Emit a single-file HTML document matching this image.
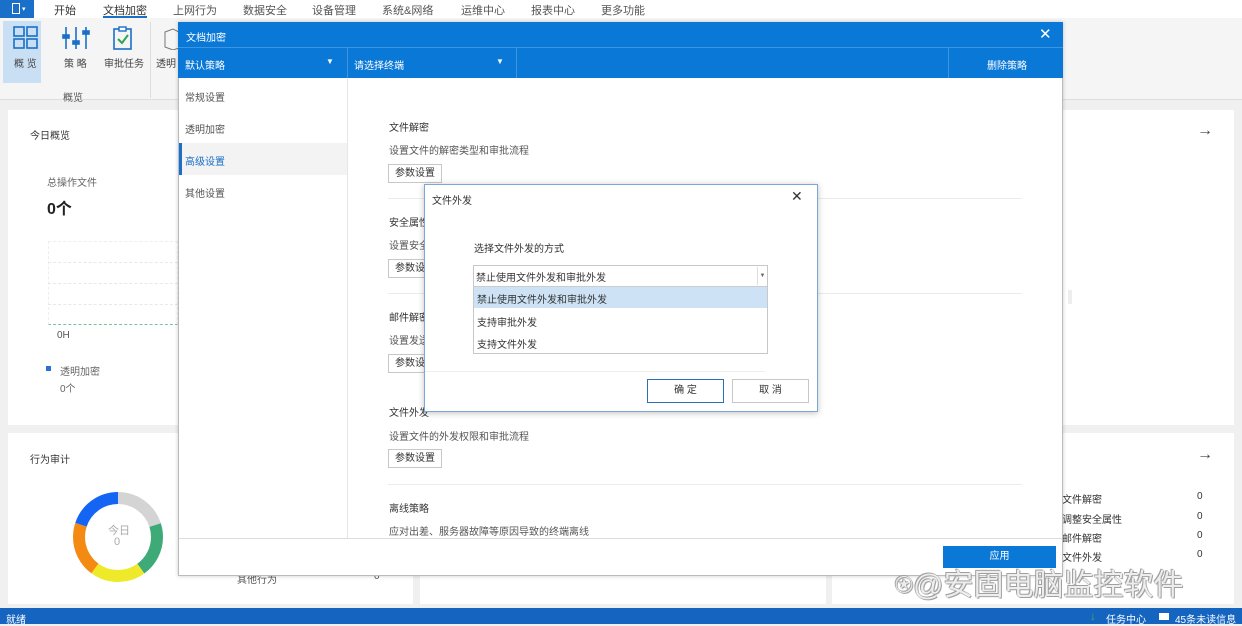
<!DOCTYPE html>
<html><head><meta charset="utf-8"><style>
*{margin:0;padding:0;box-sizing:border-box}
body{width:1242px;height:624px;overflow:hidden;position:relative;background:#f0f0f0;font-family:"Liberation Sans","Noto Sans CJK SC",sans-serif;font-size:10px;color:#333}
.a{position:absolute;white-space:nowrap}
.card{position:absolute;background:#fff}
.btn{position:absolute;border:1px solid #c8c8c8;background:#fff;font-size:10px;text-align:center;color:#333}
.hr{position:absolute;height:1px;background:#ececec}
</style></head><body>
<!-- top menu -->
<div class="a" style="left:0;top:0;width:1242px;height:18px;background:#fff"></div>
<div class="a" style="left:0;top:0;width:34px;height:18px;background:#1a6fc9"></div>
<div class="a" style="left:12px;top:3px;width:8px;height:11px;border:1.5px solid #fff"></div>
<div class="a" style="left:22px;top:5px;color:#fff;font-size:7px">▾</div>
<div class="a" style="top:2px;left:54px;font-size:11px;color:#333">开始</div>
<div class="a" style="top:2px;left:103px;font-size:11px;color:#333">文档加密</div>
<div class="a" style="left:103px;top:16px;width:44px;height:2px;background:#1a6fc9"></div>
<div class="a" style="top:2px;left:173px;font-size:11px;color:#555">上网行为</div>
<div class="a" style="top:2px;left:243px;font-size:11px;color:#555">数据安全</div>
<div class="a" style="top:2px;left:312px;font-size:11px;color:#555">设备管理</div>
<div class="a" style="top:2px;left:382px;font-size:11px;color:#555">系统&amp;网络</div>
<div class="a" style="top:2px;left:461px;font-size:11px;color:#555">运维中心</div>
<div class="a" style="top:2px;left:531px;font-size:11px;color:#555">报表中心</div>
<div class="a" style="top:2px;left:601px;font-size:11px;color:#555">更多功能</div>
<!-- ribbon -->
<div class="a" style="left:0;top:18px;width:1242px;height:82px;background:#f5f5f5;border-bottom:1px solid #ddd"></div>
<div class="a" style="left:3px;top:21px;width:38px;height:62px;background:#c9dff3"></div>
<svg class="a" style="left:13px;top:26px" width="26" height="24"><g fill="none" stroke="#1a6fc9" stroke-width="1.6"><rect x="1" y="1" width="10" height="9"/><rect x="14" y="1" width="10" height="9"/><rect x="1" y="13" width="10" height="9"/><rect x="14" y="13" width="10" height="9"/></g></svg>
<div class="a" style="left:14px;top:55px;color:#444">概 览</div>
<svg class="a" style="left:62px;top:26px" width="28" height="24"><g stroke="#1a6fc9" stroke-width="1.6"><line x1="4" y1="1" x2="4" y2="23"/><line x1="14" y1="1" x2="14" y2="23"/><line x1="24" y1="1" x2="24" y2="23"/><rect x="1" y="9" width="6" height="3" fill="#1a6fc9"/><rect x="11" y="15" width="6" height="3" fill="#1a6fc9"/><rect x="21" y="5" width="6" height="3" fill="#1a6fc9"/></g></svg>
<div class="a" style="left:64px;top:55px;color:#444">策 略</div>
<svg class="a" style="left:112px;top:26px" width="22" height="24"><rect x="2" y="3" width="17" height="20" fill="none" stroke="#1a6fc9" stroke-width="1.6"/><rect x="7" y="1" width="7" height="4" fill="#fff" stroke="#1a6fc9" stroke-width="1.4"/><path d="M6 13l4 4 6-8" fill="none" stroke="#2ea44f" stroke-width="2"/></svg>
<div class="a" style="left:104px;top:55px;color:#444">审批任务</div>
<svg class="a" style="left:163px;top:28px" width="16" height="22"><path d="M2 4l8-3 6 3v16l-6 2-8-3z" fill="none" stroke="#777"/></svg>
<div class="a" style="left:156px;top:55px;color:#444">透明</div>
<div class="a" style="left:63px;top:89px;color:#555">概览</div>
<div class="a" style="left:150px;top:22px;width:1px;height:76px;background:#ddd"></div>
<!-- cards -->
<div class="card" style="left:8px;top:110px;width:405px;height:315px"></div>
<div class="a" style="left:30px;top:127px;color:#333">今日概览</div>
<div class="a" style="left:47px;top:174px;color:#666">总操作文件</div>
<div class="a" style="left:47px;top:195px;font-size:16px;font-weight:bold;color:#222">0个</div>
<div class="a" style="left:48px;top:241px;width:130px;height:84px;border:1px dashed #eee;border-bottom:1px dashed #7cc29b"></div>
<div class="a" style="left:48px;top:262px;width:130px;border-top:1px dashed #e8e8e8"></div>
<div class="a" style="left:48px;top:283px;width:130px;border-top:1px dashed #e8e8e8"></div>
<div class="a" style="left:48px;top:304px;width:130px;border-top:1px dashed #e8e8e8"></div>
<div class="a" style="left:57px;top:330px;color:#555">0H</div>
<div class="a" style="left:46px;top:366px;width:5px;height:5px;background:#2a6fdb"></div>
<div class="a" style="left:60px;top:363px;color:#666">透明加密</div>
<div class="a" style="left:60px;top:380px;color:#666">0个</div>
<div class="card" style="left:832px;top:110px;width:402px;height:315px"></div>
<div class="a" style="left:1197px;top:122px;font-size:16px;color:#444">→</div>
<div class="a" style="left:1068px;top:290px;width:4px;height:14px;background:#eee"></div>
<div class="card" style="left:8px;top:433px;width:405px;height:171px"></div>
<div class="a" style="left:30px;top:451px;color:#333">行为审计</div>
<svg class="a" style="left:72px;top:491px" width="92" height="92" viewBox="0 0 92 92">
<g fill="none" stroke-width="12" transform="rotate(-90 46 46)">
<circle cx="46" cy="46" r="39" stroke="#d4d4d4" stroke-dasharray="49 300" stroke-dashoffset="0"/>
<circle cx="46" cy="46" r="39" stroke="#3daa78" stroke-dasharray="49 300" stroke-dashoffset="-49"/>
<circle cx="46" cy="46" r="39" stroke="#eeea2a" stroke-dasharray="49 300" stroke-dashoffset="-98"/>
<circle cx="46" cy="46" r="39" stroke="#f48a12" stroke-dasharray="49 300" stroke-dashoffset="-147"/>
<circle cx="46" cy="46" r="39" stroke="#1565f5" stroke-dasharray="50 300" stroke-dashoffset="-196"/>
</g></svg>
<div class="a" style="left:108px;top:522px;color:#aaa;font-size:11px">今日</div>
<div class="a" style="left:114px;top:536px;color:#aaa;font-size:11px">0</div>
<div class="a" style="left:237px;top:571px;color:#555">其他行为</div>
<div class="a" style="left:374px;top:571px;color:#555">0</div>
<div class="card" style="left:420px;top:433px;width:406px;height:171px"></div>
<div class="card" style="left:832px;top:433px;width:402px;height:171px"></div>
<div class="a" style="left:1197px;top:446px;font-size:16px;color:#444">→</div>
<div class="a" style="left:1062px;top:491px;color:#333">文件解密</div><div class="a" style="left:1197px;top:491px;color:#333">0</div>
<div class="a" style="left:1062px;top:511px;color:#333">调整安全属性</div><div class="a" style="left:1197px;top:511px;color:#333">0</div>
<div class="a" style="left:1062px;top:530px;color:#333">邮件解密</div><div class="a" style="left:1197px;top:530px;color:#333">0</div>
<div class="a" style="left:1062px;top:549px;color:#333">文件外发</div><div class="a" style="left:1197px;top:549px;color:#333">0</div>
<!-- status -->
<div class="a" style="left:0;top:608px;width:1242px;height:16px;background:#1565c0"></div>
<div class="a" style="left:6px;top:611px;color:#fff">就绪</div>
<div class="a" style="left:1090px;top:609px;color:#4caf50;font-size:12px">↓</div>
<div class="a" style="left:1106px;top:611px;color:#fff">任务中心</div>
<div class="a" style="left:1159px;top:613px;width:10px;height:7px;background:#fff"></div>
<div class="a" style="left:1175px;top:611px;color:#fff">45条未读信息</div>
<!-- main dialog -->
<div class="a" style="left:178px;top:22px;width:885px;height:554px;background:#fff;border:1px solid #bbb;box-shadow:0 0 4px rgba(0,0,0,.2)"></div>
<div class="a" style="left:178px;top:22px;width:885px;height:25px;background:#0a78d7"></div>
<div class="a" style="left:186px;top:29px;color:#fff">文档加密</div>
<div class="a" style="left:1039px;top:25px;color:#fff;font-size:15px">✕</div>
<div class="a" style="left:178px;top:47px;width:885px;height:31px;background:#0a78d7;border-top:1px solid #3d95e0"></div>
<div class="a" style="left:347px;top:47px;width:1px;height:31px;background:#3d95e0"></div>
<div class="a" style="left:516px;top:47px;width:1px;height:31px;background:#3d95e0"></div>
<div class="a" style="left:948px;top:47px;width:1px;height:31px;background:#3d95e0"></div>
<div class="a" style="left:185px;top:57px;color:#fff">默认策略</div>
<div class="a" style="left:326px;top:57px;color:#fff;font-size:8px">▼</div>
<div class="a" style="left:354px;top:57px;color:#fff">请选择终端</div>
<div class="a" style="left:496px;top:57px;color:#fff;font-size:8px">▼</div>
<div class="a" style="left:987px;top:57px;color:#fff">删除策略</div>
<div class="a" style="left:347px;top:78px;width:1px;height:460px;background:#e6e6e6"></div>
<div class="a" style="left:185px;top:89px;color:#555">常规设置</div>
<div class="a" style="left:185px;top:121px;color:#555">透明加密</div>
<div class="a" style="left:179px;top:143px;width:168px;height:32px;background:#f3f3f3;border-left:3px solid #1a6fc9"></div>
<div class="a" style="left:185px;top:153px;color:#1a6fc9">高级设置</div>
<div class="a" style="left:185px;top:185px;color:#555">其他设置</div>
<div class="a" style="left:389px;top:119px">文件解密</div>
<div class="a" style="left:389px;top:142px;color:#555">设置文件的解密类型和审批流程</div>
<div class="btn" style="left:388px;top:164px;width:54px;height:19px;line-height:17px">参数设置</div>
<div class="hr" style="left:388px;top:198px;width:634px"></div>
<div class="a" style="left:389px;top:214px">安全属性</div>
<div class="a" style="left:389px;top:237px;color:#555">设置安全</div>
<div class="btn" style="left:388px;top:259px;width:54px;height:19px;line-height:17px">参数设置</div>
<div class="hr" style="left:388px;top:293px;width:634px"></div>
<div class="a" style="left:389px;top:309px">邮件解密</div>
<div class="a" style="left:389px;top:332px;color:#555">设置发送</div>
<div class="btn" style="left:388px;top:354px;width:54px;height:19px;line-height:17px">参数设置</div>
<div class="a" style="left:389px;top:404px">文件外发</div>
<div class="a" style="left:389px;top:428px;color:#555">设置文件的外发权限和审批流程</div>
<div class="btn" style="left:388px;top:449px;width:54px;height:19px;line-height:17px">参数设置</div>
<div class="hr" style="left:388px;top:484px;width:634px"></div>
<div class="a" style="left:389px;top:500px">离线策略</div>
<div class="a" style="left:389px;top:523px;color:#555">应对出差、服务器故障等原因导致的终端离线</div>
<div class="a" style="left:179px;top:538px;width:883px;height:1px;background:#ddd"></div>
<div class="a" style="left:943px;top:546px;width:113px;height:22px;background:#0a78d7;color:#fff;text-align:center;line-height:22px">应用</div>
<!-- inner dialog -->
<div class="a" style="left:424px;top:184px;width:394px;height:228px;background:#fff;border:1px solid #7aa7d6;box-shadow:0 1px 6px rgba(0,0,0,.25)"></div>
<div class="a" style="left:432px;top:192px">文件外发</div>
<div class="a" style="left:791px;top:188px;font-size:14px;color:#333">✕</div>
<div class="a" style="left:474px;top:240px">选择文件外发的方式</div>
<div class="a" style="left:473px;top:265px;width:295px;height:89px;border:1px solid #c8c8c8;background:#fff"></div>
<div class="a" style="left:476px;top:269px">禁止使用文件外发和审批外发</div>
<div class="a" style="left:757px;top:267px;width:10px;height:18px;border-left:1px solid #ddd;color:#666;font-size:6px;text-align:center;line-height:18px">▼</div>
<div class="a" style="left:474px;top:286px;width:293px;height:22px;background:#cde3f5;border-top:1px solid #ccc"></div>
<div class="a" style="left:477px;top:291px">禁止使用文件外发和审批外发</div>
<div class="a" style="left:477px;top:314px">支持审批外发</div>
<div class="a" style="left:477px;top:336px">支持文件外发</div>
<div class="a" style="left:425px;top:371px;width:340px;height:1px;background:#eee"></div>
<div class="btn" style="left:647px;top:379px;width:77px;height:24px;line-height:22px;border:1px solid #2a6fb8">确 定</div>
<div class="btn" style="left:732px;top:379px;width:77px;height:24px;line-height:22px">取 消</div>
<!-- watermark -->
<div class="a" style="left:895px;top:560px;font-size:30px;color:rgba(255,255,255,.85);text-shadow:0 0 1px #888,0 0 1px #888,1px 1px 0 #aaa,-1px -1px 0 #aaa">⍟@安固电脑监控软件</div>
</body></html>
